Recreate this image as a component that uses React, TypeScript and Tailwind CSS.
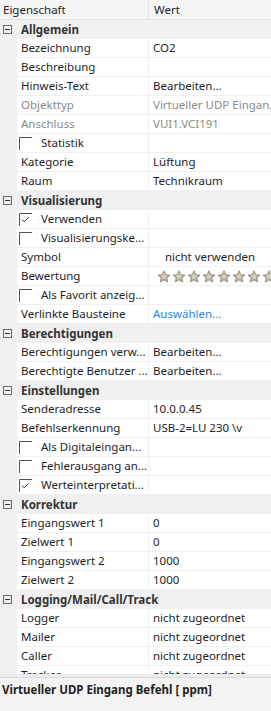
type Row =
  | { kind: "cat"; label: string }
  | { kind: "prop"; label: string; value?: string; check?: boolean; checked?: boolean; muted?: boolean; link?: boolean; center?: boolean; stars?: boolean };

const rows: Row[] = [
  { kind: "cat", label: "Allgemein" },
  { kind: "prop", label: "Bezeichnung", value: "CO2" },
  { kind: "prop", label: "Beschreibung" },
  { kind: "prop", label: "Hinweis-Text", value: "Bearbeiten..." },
  { kind: "prop", label: "Objekttyp", value: "Virtueller UDP Eingan...", muted: true },
  { kind: "prop", label: "Anschluss", value: "VUI1.VCI191", muted: true },
  { kind: "prop", label: "Statistik", check: true },
  { kind: "prop", label: "Kategorie", value: "Lüftung" },
  { kind: "prop", label: "Raum", value: "Technikraum" },
  { kind: "cat", label: "Visualisierung" },
  { kind: "prop", label: "Verwenden", check: true, checked: true },
  { kind: "prop", label: "Visualisierungske...", check: true },
  { kind: "prop", label: "Symbol", value: "nicht verwenden", center: true },
  { kind: "prop", label: "Bewertung", stars: true },
  { kind: "prop", label: "Als Favorit anzeig...", check: true },
  { kind: "prop", label: "Verlinkte Bausteine", value: "Auswählen...", link: true },
  { kind: "cat", label: "Berechtigungen" },
  { kind: "prop", label: "Berechtigungen verw...", value: "Bearbeiten..." },
  { kind: "prop", label: "Berechtigte Benutzer ...", value: "Bearbeiten..." },
  { kind: "cat", label: "Einstellungen" },
  { kind: "prop", label: "Senderadresse", value: "10.0.0.45" },
  { kind: "prop", label: "Befehlserkennung", value: "USB-2=LU 230 \\v" },
  { kind: "prop", label: "Als Digitaleingan...", check: true },
  { kind: "prop", label: "Fehlerausgang an...", check: true },
  { kind: "prop", label: "Werteinterpretati...", check: true, checked: true },
  { kind: "cat", label: "Korrektur" },
  { kind: "prop", label: "Eingangswert 1", value: "0" },
  { kind: "prop", label: "Zielwert 1", value: "0" },
  { kind: "prop", label: "Eingangswert 2", value: "1000" },
  { kind: "prop", label: "Zielwert 2", value: "1000" },
  { kind: "cat", label: "Logging/Mail/Call/Track" },
  { kind: "prop", label: "Logger", value: "nicht zugeordnet" },
  { kind: "prop", label: "Mailer", value: "nicht zugeordnet" },
  { kind: "prop", label: "Caller", value: "nicht zugeordnet" },
  { kind: "prop", label: "Tracker", value: "nicht zugeordnet" },
];

function MinusBox() {
  return (
    <svg width="9" height="9" viewBox="0 0 9 9" className="shrink-0">
      <rect x="0.5" y="0.5" width="8" height="8" fill="none" stroke="#6b6b6b" />
      <line x1="2" y1="4.5" x2="7" y2="4.5" stroke="#333" />
    </svg>
  );
}

function CheckBox({ checked }: { checked?: boolean }) {
  return (
    <svg width="13" height="13" viewBox="0 0 13 13" className="shrink-0">
      <path d="M0.5 13V0.5H13" fill="none" stroke="#555" />
      {checked && <path d="M3 6.5l2.2 2.3L9.5 4.5" fill="none" stroke="#333" strokeWidth="1" />}
    </svg>
  );
}

function Star() {
  return (
    <svg width="14" height="13" viewBox="0 0 14 13" className="shrink-0">
      <path
        d="M7 0.8l1.8 3.9 4.2.4-3.2 2.8 1 4.2L7 9.9l-3.8 2.2 1-4.2L1 5.1l4.2-.4z"
        fill="#b3aa9a"
        stroke="#8f8676"
        strokeWidth="0.8"
      />
      <path d="M7 3l1 2.3 2.4.2-1.8 1.6.6 2.4L7 8.2 4.8 9.5l.6-2.4-1.8-1.6 2.4-.2z" fill="#d8d2c6" />
    </svg>
  );
}

export default function App() {
  return (
    <div
      className="w-[271px] h-[711px] flex flex-col bg-[#f3f3f3] text-[11.5px] text-[#1e1e1e] overflow-hidden"
      style={{ fontFamily: '"Noto Sans", "Open Sans", sans-serif' }}
    >
      {/* Header */}
      <div className="h-[20px] shrink-0 flex border-b border-[#e3e3e3] bg-[#f5f5f5]">
        <div className="w-[149px] pl-[3px] flex items-center border-r border-[#e3e3e3]">Eigenschaft</div>
        <div className="flex-1 pl-[5px] flex items-center">Wert</div>
      </div>

      {/* Property grid */}
      <div className="h-[654px] shrink-0 overflow-hidden bg-[#f0f0f0]">
        {rows.map((r, i) =>
          r.kind === "cat" ? (
            <div key={i} className="h-[19px] flex items-center gap-[9px] pl-[3px] font-bold text-[#333]">
              <MinusBox />
              <span>{r.label}</span>
            </div>
          ) : (
            <div key={i} className="h-[19px] flex ml-[17px] bg-white border-b border-[#f0f0f0]">
              <div
                className={`w-[132px] shrink-0 flex items-center border-r border-[#f0f0f0] whitespace-nowrap overflow-hidden ${
                  r.check ? "pl-[2px] gap-[9px]" : "pl-[4px]"
                } ${r.muted ? "text-[#8a8a8a]" : ""}`}
              >
                {r.check && <CheckBox checked={r.checked} />}
                <span>{r.label}</span>
              </div>
              <div
                className={`flex-1 flex items-center whitespace-nowrap overflow-hidden ${
                  r.center ? "justify-center" : "pl-[4px]"
                } ${r.muted ? "text-[#8a8a8a]" : ""} ${r.link ? "text-[#2f86e0]" : ""}`}
              >
                {r.stars ? (
                  <div className="flex gap-[1px] pl-[4px]">
                    {Array.from({ length: 9 }).map((_, k) => (
                      <Star key={k} />
                    ))}
                  </div>
                ) : (
                  r.value
                )}
              </div>
            </div>
          )
        )}
      </div>

      {/* Splitter + description */}
      <div className="h-[4px] shrink-0 bg-[#ececec] border-b border-[#dcdcdc]" />
      <div className="flex-1 pl-[2px] pt-[3px] font-bold text-[#222]">Virtueller UDP Eingang Befehl [ ppm]</div>
    </div>
  );
}
